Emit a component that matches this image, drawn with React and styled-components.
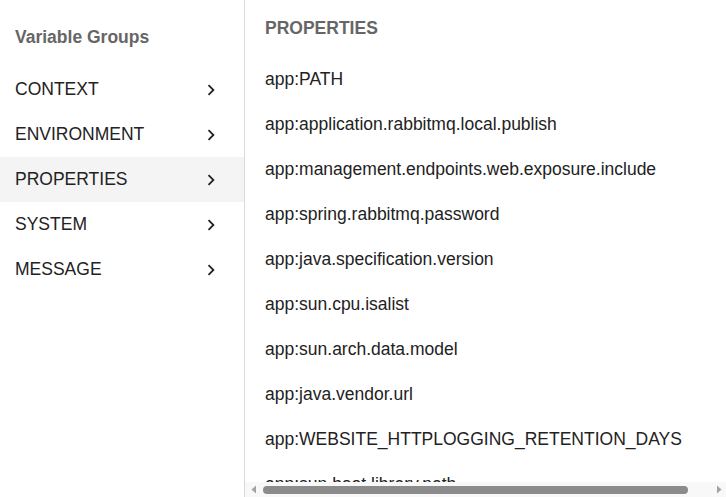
import React from 'react'
import styled, { createGlobalStyle } from 'styled-components'

const GlobalStyle = createGlobalStyle`
  html, body {
    margin: 0;
    padding: 0;
    height: 100%;
    background: #fff;
    font-family: "Liberation Sans", Arial, sans-serif;
  }
  #root {
    height: 100%;
  }
`

const Layout = styled.div`
  display: flex;
  height: 100vh;
  overflow: hidden;
`

const Sidebar = styled.nav`
  flex: 0 0 244px;
  border-right: 1px solid #d9d9d9;
  display: flex;
  flex-direction: column;
`

const SidebarTitle = styled.h2`
  margin: 0;
  padding: 27px 15px 20px;
  font-size: 17.5px;
  line-height: 20px;
  font-weight: bold;
  color: #666;
`

const GroupItem = styled.div`
  display: flex;
  align-items: center;
  justify-content: space-between;
  height: 45px;
  padding: 0 22px 0 15px;
  font-size: 17.5px;
  color: #222;
  background: ${props => (props.active ? '#f4f4f4' : 'transparent')};
  cursor: pointer;
`

const Chevron = styled.svg`
  width: 22px;
  height: 22px;
  fill: #222;
`

const Content = styled.main`
  flex: 1;
  min-width: 0;
  display: flex;
  flex-direction: column;
`

const Viewport = styled.div`
  flex: 1;
  min-height: 0;
  overflow: hidden;
`

const ContentInner = styled.div`
  padding: 0 20px;
`

const SectionTitle = styled.h3`
  margin: 0;
  padding: 18px 0 19px;
  font-size: 17.5px;
  line-height: 20px;
  font-weight: bold;
  color: #666;
`

const PropertyRow = styled.div`
  height: 45px;
  line-height: 45px;
  font-size: 17.5px;
  color: #222;
  white-space: nowrap;
`

const ScrollTrack = styled.div`
  flex: 0 0 15px;
  display: flex;
  align-items: center;
  background: #f8f8f8;
  padding: 0 2px 0 4px;
`

const ScrollArrow = styled.svg`
  width: 12px;
  height: 15px;
  fill: #a3a3a3;
  flex: 0 0 auto;
`

const ThumbLane = styled.div`
  flex: 1;
  display: flex;
  align-items: center;
  padding: 0 24px 0 2px;
`

const Thumb = styled.div`
  height: 8px;
  width: 100%;
  border-radius: 4px;
  background: #8b8b8b;
`

const groups = ['CONTEXT', 'ENVIRONMENT', 'PROPERTIES', 'SYSTEM', 'MESSAGE']

const properties = [
  'app:PATH',
  'app:application.rabbitmq.local.publish',
  'app:management.endpoints.web.exposure.include',
  'app:spring.rabbitmq.password',
  'app:java.specification.version',
  'app:sun.cpu.isalist',
  'app:sun.arch.data.model',
  'app:java.vendor.url',
  'app:WEBSITE_HTTPLOGGING_RETENTION_DAYS',
  'app:sun.boot.library.path',
  'app:java.vm.specification.vendor',
  'app:user.timezone',
]

function ChevronRight() {
  return (
    <Chevron viewBox="0 0 24 24">
      <path d="M10 6L8.59 7.41 13.17 12l-4.58 4.59L10 18l6-6z" />
    </Chevron>
  )
}

function HorizontalScrollbar() {
  return (
    <ScrollTrack>
      <ScrollArrow viewBox="0 0 12 15">
        <path d="M7 3.5L2.5 7.5 7 11.5z" />
      </ScrollArrow>
      <ThumbLane>
        <Thumb />
      </ThumbLane>
      <ScrollArrow viewBox="0 0 12 15">
        <path d="M5 3.5L9.5 7.5 5 11.5z" />
      </ScrollArrow>
    </ScrollTrack>
  )
}

export default function App() {
  return (
    <>
      <GlobalStyle />
      <Layout>
        <Sidebar>
          <SidebarTitle>Variable Groups</SidebarTitle>
          {groups.map(g => (
            <GroupItem key={g} active={g === 'PROPERTIES'}>
              <span>{g}</span>
              <ChevronRight />
            </GroupItem>
          ))}
        </Sidebar>
        <Content>
          <Viewport>
            <ContentInner>
              <SectionTitle>PROPERTIES</SectionTitle>
              {properties.map(p => (
                <PropertyRow key={p}>{p}</PropertyRow>
              ))}
            </ContentInner>
          </Viewport>
          <HorizontalScrollbar />
        </Content>
      </Layout>
    </>
  )
}
